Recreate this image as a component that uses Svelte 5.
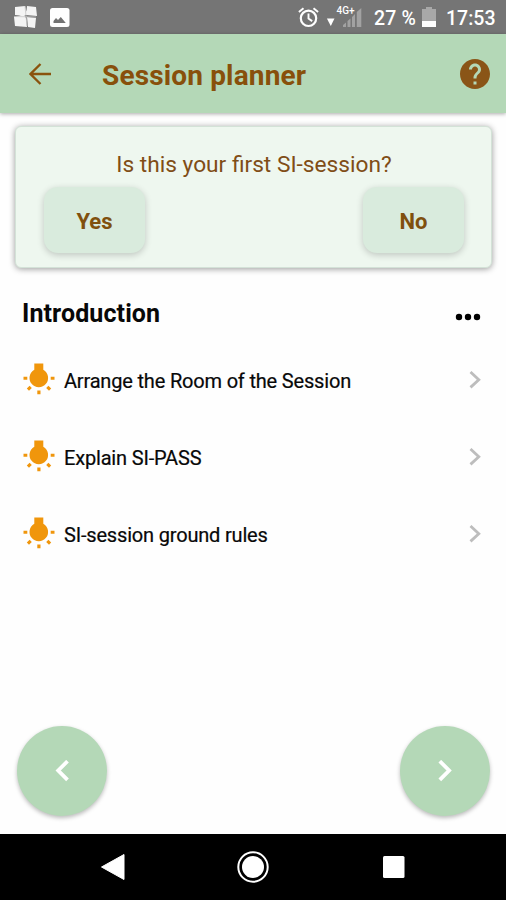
<script>
  const tips = ['Arrange the Room of the Session', 'Explain SI-PASS', 'SI-session ground rules'];
</script>

<div class="screen">
  <div class="status">
    <svg width="70" height="34" viewBox="0 0 70 34">
      <path d="M15 7l10-1 2 8-3 2-9-1zM27 6l9 1 1 9-11-1zM14 17l10-2 2 3 1 9-12-1zM27 17l9 1-1 10-7-1z" fill="#f4f4f4" />
      <path d="M25 6l2 20M14 16.500l22 .5" stroke="#c5c5c5" stroke-width=".8" fill="none" />
      <rect x="50" y="8" width="19.500" height="19" rx="2.500" fill="#fff" />
      <path d="M53.500 23v-2l2.500-3 2 2 2.800-3 5 6z" fill="#737373" />
    </svg>
    <span class="grow"></span>
    <svg width="66" height="34" viewBox="298 0 66 34">
      <circle cx="309.500" cy="18.300" r="7.700" fill="none" stroke="#fff" stroke-width="2.200" />
      <path d="M309.500 13.500v5l3.700 2.600M299.900 12l4.600-3.800M319.100 12l-4.600-3.800" fill="none" stroke="#fff" stroke-width="1.900" />
      <path d="M327.900 18.500h7.600L331.800 26z" fill="#fff" />
      <g fill="#a2a2a2"><path d="M344 27v-2l3-2.500V27zM348.500 27v-6l3-2.500V27zM353 27V17l3-3v13zM357.800 27V12l4.500-4v19z" /></g>
      <text x="337.500" y="14" textLength="18" class="net">4G+</text>
    </svg>
    <span class="pct">27 %</span>
    <svg width="14" height="34" viewBox="0 0 14 34">
      <path d="M4 7h6v2h4v13H0V9h4z" fill="#a8a8a8" /><path d="M0 21h14v6H0z" fill="#fff" />
    </svg>
    <span class="time">17:53</span>
  </div>

  <header>
    <svg width="22" height="22" viewBox="0 0 22 22"><path d="M22 11H2M11.500 1L1.500 11l10 10" fill="none" stroke="#8a530e" stroke-width="2.300" /></svg>
    <h1>Session planner</h1>
    <svg width="30" height="30" viewBox="2 2 20 20">
      <path fill="#8a5517" d="M12 2C6.480 2 2 6.480 2 12s4.480 10 10 10 10-4.480 10-10S17.520 2 12 2zm1 17h-2v-2h2v2zm2.070-7.750l-.9.920C13.450 12.900 13 13.500 13 15h-2v-.5c0-1.100.45-2.100 1.170-2.830l1.240-1.260c.37-.36.590-.86.590-1.410 0-1.100-.9-2-2-2s-2 .9-2 2H8c0-2.210 1.790-4 4-4s4 1.790 4 4c0 .88-.36 1.680-.93 2.250z" />
    </svg>
  </header>

  <section class="card">
    <p>Is this your first SI-session?</p>
    <div class="answers"><button>Yes</button><button>No</button></div>
  </section>

  <div class="heading">
    <h2>Introduction</h2>
    <svg width="26" height="8" viewBox="0 0 26 8"><circle cx="4" cy="4" r="3.200" /><circle cx="13" cy="4" r="3.200" /><circle cx="22" cy="4" r="3.200" /></svg>
  </div>

  <ul>
    {#each tips as tip}
      <li>
        <svg width="34" height="34" viewBox="0 0 34 34" fill="#f0960c">
          <path d="M12.300 .500h9v6.300a9.300 9.300 0 1 1-9 0z" />
          <path d="M1.500 13.700h3.800v3H1.500zM28.700 13.700h3.800v3h-3.800zM15.300 27.500h3.200v3.800h-3.200zM4.800 25.600l2.800-2.800 2.200 2.200-2.800 2.800zM29.200 25.600l-2.800-2.800-2.200 2.200 2.800 2.800z" />
        </svg>
        <span>{tip}</span>
        <svg width="12" height="18" viewBox="0 0 12 18"><path d="M1.500 1L9.800 8.700l-8.300 7.700" fill="none" stroke="#bdbdbd" stroke-width="2.800" /></svg>
      </li>
    {/each}
  </ul>

  <div class="pager">
    <button aria-label="Previous"><svg width="14" height="22" viewBox="0 0 14 22"><path d="M12.500 1.200L3.200 10.500l9.300 9.300" /></svg></button>
    <button aria-label="Next"><svg width="14" height="22" viewBox="0 0 14 22"><path d="M1.800 1.200l9.300 9.300-9.300 9.300" /></svg></button>
  </div>

  <nav>
    <svg width="26" height="28" viewBox="0 0 26 28"><path d="M24 1.500v25L1.500 14z" fill="#fff" stroke="#fff" stroke-linejoin="round" /></svg>
    <svg width="34" height="34" viewBox="0 0 34 34"><circle cx="17" cy="17" r="14.700" fill="none" stroke="#fff" stroke-width="2" /><circle cx="17" cy="17" r="11" fill="#fff" /></svg>
    <svg width="22" height="22" viewBox="0 0 22 22"><rect width="21.500" height="22" rx="1.500" fill="#fff" /></svg>
  </nav>
</div>

<style>
  .screen { width: 506px; height: 900px; display: flex; flex-direction: column; background: #fefefe; font-family: Roboto, sans-serif; color: #080808; overflow: hidden; }
  svg { display: block; flex: none; }
  .status { height: 34px; flex: none; display: flex; align-items: center; background: #757575; color: #fff; font-size: 19.500px; font-weight: 500; white-space: nowrap; }
  .status span { padding-top: 2px; }
  .grow { flex: 1; }
  .net { font-size: 10px; font-weight: 500; fill: #fff; }
  .pct { width: 48px; padding-left: 11px; letter-spacing: .2px; }
  .time { width: 49px; margin: 0 11px 0 10px; }
  header { height: 79px; flex: none; box-sizing: border-box; padding: 0 16px 0 29px; display: flex; align-items: center; background: #b4d8b7; box-shadow: 0 1px 4px #0005; color: #88500b; }
  h1 { flex: 1; margin: 3px 0 0 51px; font-size: 28px; font-weight: 700; letter-spacing: .15px; }
  .card { height: 142px; flex: none; margin: 13px 14px 0 15px; box-sizing: border-box; padding: 24px 27px 0 28px; border: 1px solid #d3e2d7; border-radius: 6px; background: #eef7ef; box-shadow: 0 1px 6px #0006; color: #804d16; }
  p { margin: 0; font-size: 22.700px; line-height: 28px; text-align: center; }
  .answers { display: flex; justify-content: space-between; margin-top: 8px; }
  .answers button { width: 101px; height: 66px; padding: 3px 0 0; border: 0; border-radius: 14px; background: #d9ebdd; box-shadow: 0 2px 7px #0003; font: 700 22px Roboto, sans-serif; color: #80500e; }
  .heading { height: 32px; flex: none; margin: 30px 25px 0 22px; display: flex; align-items: center; justify-content: space-between; }
  .heading svg { margin-top: 6px; }
  h2 { margin: 0; font-size: 25px; font-weight: 700; line-height: 32px; letter-spacing: .1px; }
  ul { margin: 11px 0 0; padding: 0; list-style: none; }
  li { height: 77.400px; padding: 0 25px 0 22px; display: flex; align-items: center; }
  li span { flex: 1; margin-left: 8px; padding-top: 2px; font-size: 20px; letter-spacing: -.18px; white-space: nowrap; -webkit-text-stroke: .2px #080808; }
  .pager { display: flex; justify-content: space-between; margin: auto 16px 18px 17px; }
  .pager button { width: 90px; height: 90px; padding: 0; border: 0; border-radius: 50%; background: #b4d8b7; box-shadow: 0 2px 4px #0004; display: flex; align-items: center; justify-content: center; }
  .pager path { fill: none; stroke: #fff; stroke-width: 3.800; }
  nav { height: 66px; flex: none; display: flex; align-items: center; background: #000; padding-left: 100px; }
  nav svg:nth-child(2) { margin-left: 110px; }
  nav svg:nth-child(3) { margin-left: 113px; }
</style>
